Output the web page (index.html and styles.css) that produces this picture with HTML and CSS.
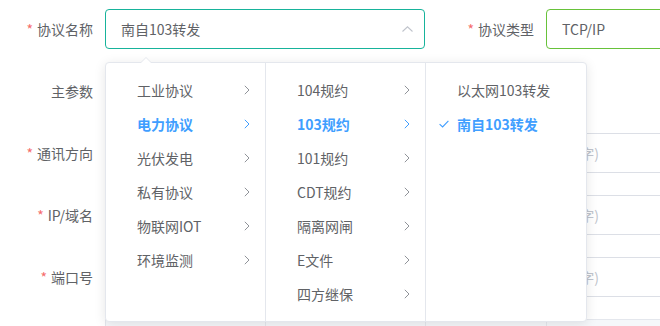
FILE: index.html
```html
<!DOCTYPE html>
<html lang="zh-CN">
<head>
<meta charset="utf-8">
<link rel="stylesheet" href="styles.css">
</head>
<body>
<div class="page">
  <form class="form">
    <div class="row">
      <label class="label"><span class="req">*</span>协议名称</label>
      <div class="field select is-focus">
        <span class="value">南自103转发</span>
        <svg class="caret" width="11" height="6" viewBox="0 0 11 6"><path d="M0.5 5.5 L5.5 0.8 L10.5 5.5" fill="none" stroke="#c0c4cc" stroke-width="1.1"/></svg>
      </div>
      <label class="label label-2"><span class="req">*</span>协议类型</label>
      <div class="field field-2 is-success"><span class="value">TCP/IP</span></div>
    </div>
    <div class="row">
      <label class="label">主参数</label>
    </div>
    <div class="row">
      <label class="label"><span class="req">*</span>通讯方向</label>
      <div class="field wide"><span class="ph">(最多32个字)</span></div>
    </div>
    <div class="row">
      <label class="label"><span class="req">*</span>IP/域名</label>
      <div class="field wide"><span class="ph">(最多64个字)</span></div>
    </div>
    <div class="row">
      <label class="label"><span class="req">*</span>端口号</label>
      <div class="field wide"><span class="ph">(最多5个字)</span></div>
    </div>
    <div class="table-head">
      <div class="th th-a"></div><div class="th th-b"></div><div class="th th-c"></div><div class="th th-d"></div>
    </div>
  </form>

  <div class="cascader">
    <span class="arrow"></span>
    <ul class="menu">
      <li class="item">工业协议<svg class="chev" width="6" height="10" viewBox="0 0 6 10"><path d="M0.8 0.8 L5 5 L0.8 9.2" fill="none" stroke="currentColor" stroke-width="1"/></svg></li>
      <li class="item active">电力协议<svg class="chev" width="6" height="10" viewBox="0 0 6 10"><path d="M0.8 0.8 L5 5 L0.8 9.2" fill="none" stroke="currentColor" stroke-width="1"/></svg></li>
      <li class="item">光伏发电<svg class="chev" width="6" height="10" viewBox="0 0 6 10"><path d="M0.8 0.8 L5 5 L0.8 9.2" fill="none" stroke="currentColor" stroke-width="1"/></svg></li>
      <li class="item">私有协议<svg class="chev" width="6" height="10" viewBox="0 0 6 10"><path d="M0.8 0.8 L5 5 L0.8 9.2" fill="none" stroke="currentColor" stroke-width="1"/></svg></li>
      <li class="item">物联网IOT<svg class="chev" width="6" height="10" viewBox="0 0 6 10"><path d="M0.8 0.8 L5 5 L0.8 9.2" fill="none" stroke="currentColor" stroke-width="1"/></svg></li>
      <li class="item">环境监测<svg class="chev" width="6" height="10" viewBox="0 0 6 10"><path d="M0.8 0.8 L5 5 L0.8 9.2" fill="none" stroke="currentColor" stroke-width="1"/></svg></li>
    </ul>
    <ul class="menu">
      <li class="item">104规约<svg class="chev" width="6" height="10" viewBox="0 0 6 10"><path d="M0.8 0.8 L5 5 L0.8 9.2" fill="none" stroke="currentColor" stroke-width="1"/></svg></li>
      <li class="item active">103规约<svg class="chev" width="6" height="10" viewBox="0 0 6 10"><path d="M0.8 0.8 L5 5 L0.8 9.2" fill="none" stroke="currentColor" stroke-width="1"/></svg></li>
      <li class="item">101规约<svg class="chev" width="6" height="10" viewBox="0 0 6 10"><path d="M0.8 0.8 L5 5 L0.8 9.2" fill="none" stroke="currentColor" stroke-width="1"/></svg></li>
      <li class="item">CDT规约<svg class="chev" width="6" height="10" viewBox="0 0 6 10"><path d="M0.8 0.8 L5 5 L0.8 9.2" fill="none" stroke="currentColor" stroke-width="1"/></svg></li>
      <li class="item">隔离网闸<svg class="chev" width="6" height="10" viewBox="0 0 6 10"><path d="M0.8 0.8 L5 5 L0.8 9.2" fill="none" stroke="currentColor" stroke-width="1"/></svg></li>
      <li class="item">E文件<svg class="chev" width="6" height="10" viewBox="0 0 6 10"><path d="M0.8 0.8 L5 5 L0.8 9.2" fill="none" stroke="currentColor" stroke-width="1"/></svg></li>
      <li class="item">四方继保<svg class="chev" width="6" height="10" viewBox="0 0 6 10"><path d="M0.8 0.8 L5 5 L0.8 9.2" fill="none" stroke="currentColor" stroke-width="1"/></svg></li>
    </ul>
    <ul class="menu menu-leaf">
      <li class="item">以太网103转发</li>
      <li class="item active"><svg class="check" width="10" height="8" viewBox="0 0 10 8"><path d="M0.6 4.2 L3.6 7 L9.4 0.8" fill="none" stroke="currentColor" stroke-width="1.1"/></svg>南自103转发</li>
    </ul>
  </div>
</div>
</body>
</html>
```

FILE: styles.css
```css
* { box-sizing: border-box; }
html, body {
  margin: 0;
  padding: 0;
  background: #fff;
  overflow: hidden;
}
body {
  width: 660px;
  height: 326px;
  font-family: "Noto Sans CJK SC", "Noto Sans", sans-serif;
  font-size: 14px;
  color: #606266;
}
.page {
  position: relative;
  width: 660px;
  height: 326px;
  overflow: hidden;
}
.form {
  padding-top: 9px;
  margin: 0;
}
.row {
  display: flex;
  align-items: center;
  height: 40px;
  margin-bottom: 22px;
  white-space: nowrap;
}
.label {
  flex: 0 0 105px;
  padding-right: 12px;
  text-align: right;
  line-height: 40px;
  color: #606266;
}
.label-2 { flex-basis: 121px; }
.req {
  color: #f56c6c;
  margin-right: 4px;
}
.field {
  flex: 0 0 auto;
  height: 40px;
  border: 1px solid #dcdfe6;
  border-radius: 4px;
  display: flex;
  align-items: center;
  padding: 0 15px;
  background: #fff;
  overflow: hidden;
}
.select {
  width: 320px;
  justify-content: space-between;
  padding-right: 11px;
}
.is-focus { border-color: #17b39b; }
.is-success { border-color: #67c23a; }
.field-2 { width: 200px; }
.value { color: #606266; }
.caret { display: block; margin-top: -1px; }
.wide { width: 620px; }
.ph {
  display: block;
  width: 478px;
  text-align: right;
  color: #c0c4cc;
  overflow: hidden;
}
.table-head {
  display: flex;
  margin-left: 105px;
  margin-top: 1px;
  height: 30px;
  background: #f5f7fa;
  border-top: 1px solid #e4e7ed;
}
.th { border-left: 1px solid #e4e7ed; }
.th-a { width: 160px; }
.th-b { width: 160px; }
.th-c { width: 121px; }
.th-d { flex: 1; }

/* cascader dropdown */
.cascader {
  position: absolute;
  left: 105px;
  top: 62px;
  display: flex;
  background: #fff;
  border: 1px solid #e4e7ed;
  border-radius: 4px;
  box-shadow: 0 2px 12px 0 rgba(0, 0, 0, 0.1);
  height: 260px;
}
.arrow {
  position: absolute;
  top: -6px;
  left: 34px;
  width: 0;
  height: 0;
  border-left: 6px solid transparent;
  border-right: 6px solid transparent;
  border-bottom: 6px solid #e4e7ed;
}
.arrow::after {
  content: "";
  position: absolute;
  left: -5px;
  top: 1px;
  border-left: 5px solid transparent;
  border-right: 5px solid transparent;
  border-bottom: 5px solid #fff;
}
.menu {
  list-style: none;
  margin: 0;
  padding: 10px 0 8px;
  width: 160px;
  border-right: 1px solid #e4e7ed;
}
.menu-leaf { border-right: none; width: 160px; }
.item {
  position: relative;
  display: flex;
  align-items: center;
  justify-content: space-between;
  height: 34px;
  padding: 0 15px 0 31px;
  color: #606266;
  white-space: nowrap;
}
.item .chev { color: #909399; display: block; }
.item.active {
  color: #409eff;
  font-weight: 700;
}
.item.active .chev { color: #409eff; }
.menu-leaf .item { justify-content: flex-start; }
.check {
  position: absolute;
  left: 13px;
  top: 13px;
  color: #409eff;
}
```
